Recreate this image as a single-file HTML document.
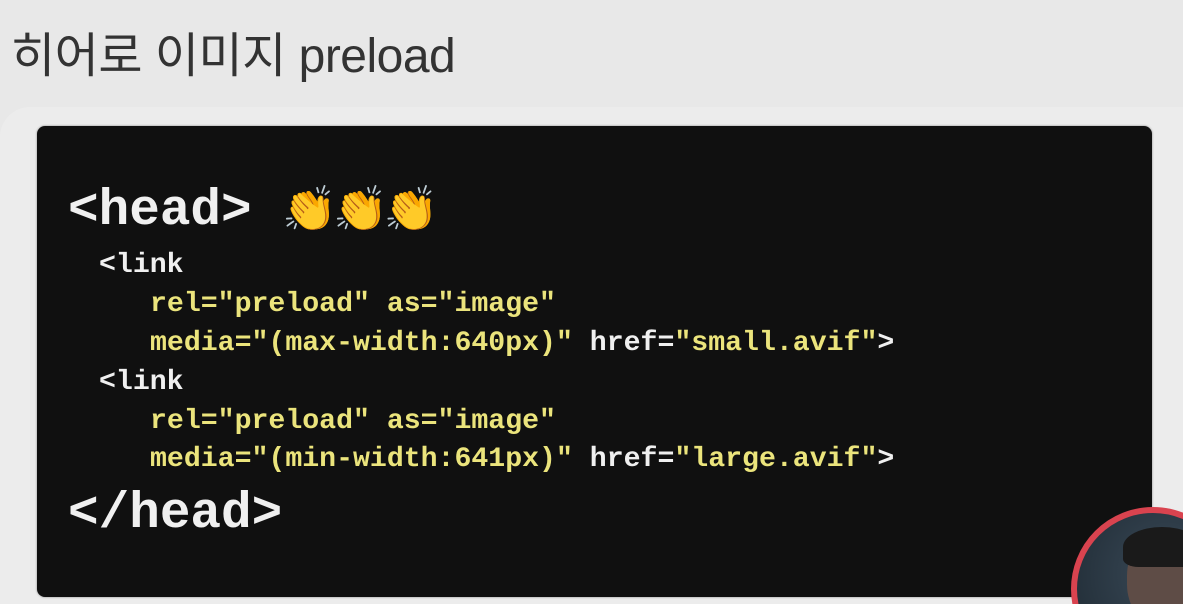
<!DOCTYPE html>
<html><head><meta charset="utf-8"><style>
html,body{margin:0;width:1183px;height:604px;overflow:hidden}
body{background:#e8e8e8;position:relative;font-family:"Liberation Sans","Noto Sans CJK KR",sans-serif}
.title{position:absolute;left:11px;top:16px;font-size:48px;color:#333;letter-spacing:-0.5px}
.panel{position:absolute;left:0;top:107px;width:1183px;height:497px;background:#ececec;border-radius:30px 0 0 0}
.code{position:absolute;left:37px;top:126px;width:1115px;height:471px;background:#101010;border-radius:8px;box-shadow:0 0 2px #888}
.m{position:absolute;font-family:"Liberation Mono",monospace;font-weight:bold;color:#f0f0f0;white-space:pre}
.b{font-size:51px}
.s{font-size:28.2px}
.y{color:#ebe47c}
.clip{position:absolute;left:1071px;top:507px;width:112px;height:97px;overflow:hidden}
.av{position:absolute;left:0;top:0;width:164px;height:164px;border-radius:50%;background:radial-gradient(circle at 60% 40%,#3a4a58,#1d2831);border:6px solid #d9434f;box-sizing:border-box;overflow:hidden}
</style></head><body>
<div class="title">히어로 이미지 preload</div>
<div class="panel"></div>
<div class="code"></div>
<div class="m b" style="left:68px;top:183px">&lt;head&gt; <span style="font-family:'Noto Color Emoji',sans-serif;font-size:44px;font-weight:normal;letter-spacing:-4px">👏👏👏</span></div>
<div class="m s" style="left:99px;top:250px">&lt;link</div>
<div class="m s y" style="left:150px;top:289px">rel="preload" as="image"</div>
<div class="m s" style="left:150px;top:328px"><span class="y">media="(max-width:640px)"</span> href=<span class="y">"small.avif"</span>&gt;</div>
<div class="m s" style="left:99px;top:367px">&lt;link</div>
<div class="m s y" style="left:150px;top:406px">rel="preload" as="image"</div>
<div class="m s" style="left:150px;top:444px"><span class="y">media="(min-width:641px)"</span> href=<span class="y">"large.avif"</span>&gt;</div>
<div class="m b" style="left:68px;top:486px">&lt;/head&gt;</div>
<div class="clip"><div class="av"><div style="position:absolute;left:50px;top:22px;width:70px;height:90px;border-radius:45%;background:#5e4c46"></div><div style="position:absolute;left:46px;top:14px;width:78px;height:40px;border-radius:50% 50% 20% 20%;background:#1a1a1a"></div></div></div>
</body></html>
